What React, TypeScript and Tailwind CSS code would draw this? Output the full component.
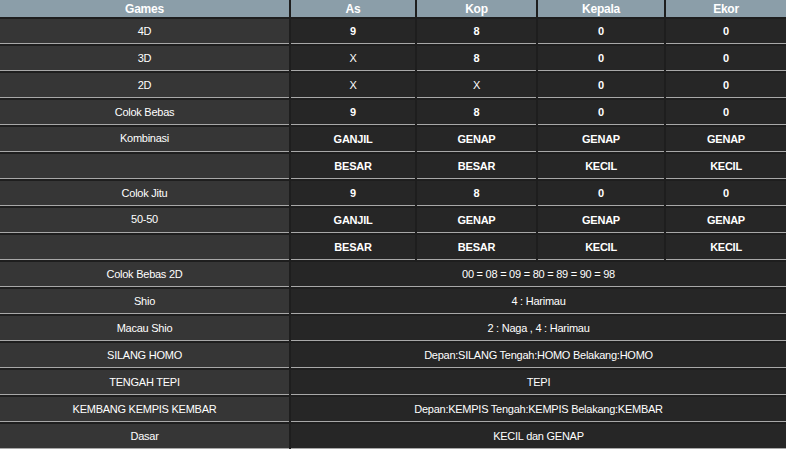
const cols = "grid grid-cols-[289px_124px_119px_126px_120px] gap-[2px]";
const top: [string, string[]][] = [
  ["4D", ["9", "8", "0", "0"]],
  ["3D", ["X", "8", "0", "0"]],
  ["2D", ["X", "X", "0", "0"]],
  ["Colok Bebas", ["9", "8", "0", "0"]],
  ["Kombinasi", ["GANJIL", "GENAP", "GENAP", "GENAP"]],
  ["", ["BESAR", "BESAR", "KECIL", "KECIL"]],
  ["Colok Jitu", ["9", "8", "0", "0"]],
  ["50-50", ["GANJIL", "GENAP", "GENAP", "GENAP"]],
  ["", ["BESAR", "BESAR", "KECIL", "KECIL"]],
];
const wide: [string, string][] = [
  ["Colok Bebas 2D", "00 = 08 = 09 = 80 = 89 = 90 = 98"],
  ["Shio", "4 : Harimau"],
  ["Macau Shio", "2 : Naga , 4 : Harimau"],
  ["SILANG HOMO", "Depan:SILANG Tengah:HOMO Belakang:HOMO"],
  ["TENGAH TEPI", "TEPI"],
  ["KEMBANG KEMPIS KEMBAR", "Depan:KEMPIS Tengah:KEMPIS Belakang:KEMBAR"],
  ["Dasar", "KECIL dan GENAP"],
];
const cell = "h-[25px] border-b border-[#a8a8a8] flex items-center justify-center";
export default function App() {
  return (
    <div className="w-[786px] h-[449px] overflow-hidden bg-[#1e1e1e] text-white text-[11px] tracking-[-0.25px] flex flex-col gap-[2px]" style={{ fontFamily: '"Liberation Sans", Arial, sans-serif' }}>
      <div className={cols}>
        {["Games", "As", "Kop", "Kepala", "Ekor"].map((h) => (
          <div key={h} className="h-[17px] bg-[#8b9ea9] font-bold text-[12px] flex items-center justify-center">{h}</div>
        ))}
      </div>
      {top.map(([g, v], i) => (
        <div key={i} className={cols}>
          <div className={`${cell} bg-[#363636]`}><span className={i === 4 || i === 7 ? "-mt-[2px]" : ""}>{g}</span></div>
          {v.map((x, j) => (
            <div key={j} className={`${cell} bg-[#262626] ${x === "X" ? "" : "font-bold"}`}>{x}</div>
          ))}
        </div>
      ))}
      {wide.map(([g, v], i) => (
        <div key={i} className="grid grid-cols-[289px_495px] gap-[2px]">
          <div className={`${cell} bg-[#363636]`}>{g}</div>
          <div className={`${cell} bg-[#262626]`}>{v}</div>
        </div>
      ))}
    </div>
  );
}
